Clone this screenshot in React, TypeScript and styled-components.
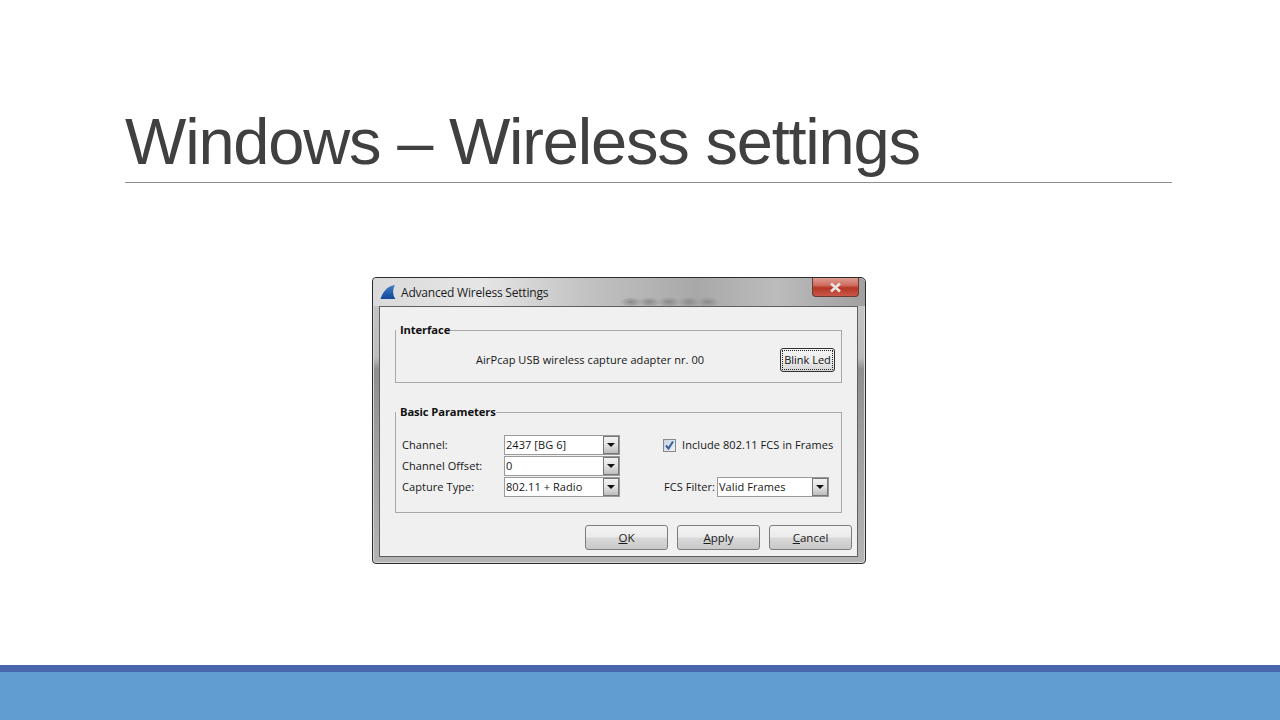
import * as React from 'react';
import styled, { createGlobalStyle } from 'styled-components';

const GlobalStyle = createGlobalStyle`
  html, body {
    margin: 0;
    padding: 0;
    background: #fff;
  }
`;

const Slide = styled.main`
  width: 1280px;
  height: 720px;
  display: flex;
  flex-direction: column;
  overflow: hidden;
  background: #fff;
`;

const Header = styled.header`
  height: 183px;
  margin: 0 108px 0 125px;
  box-sizing: border-box;
  border-bottom: 1px solid #8c8c8c;
  display: flex;
  align-items: flex-end;
`;

const Title = styled.h1`
  margin: 0;
  font: 400 65px/80px 'Liberation Sans', Arial, sans-serif;
  letter-spacing: -1.2px;
  color: #404040;
  white-space: nowrap;
`;

const Stage = styled.section`
  flex: 1;
  display: flex;
  align-items: flex-start;
  padding: 94px 0 0 372px;
`;

const Dialog = styled.div`
  width: 494px;
  height: 287px;
  box-sizing: border-box;
  border: 1px solid #2c2c2c;
  border-radius: 4px 5px 4px 4px;
  padding: 0 7px 6px 6px;
  display: flex;
  flex-direction: column;
  background:
    linear-gradient(180deg, #c8c8c8 0, #bdbdbd 28%, #8f8f8f 32%, #a0a0a0 60%, #b4b4b4 100%);
  box-shadow: inset 0 0 0 1px #d8d8d8;
`;

const TitleBar = styled.div`
  height: 28px;
  flex: none;
  margin: 0 -7px 0 -6px;
  padding: 0 6px 0 7px;
  display: flex;
  align-items: flex-start;
  gap: 5px;
  background:
    radial-gradient(ellipse 11px 5px at 258px 24px, #8a8a8a 0, transparent 100%),
    radial-gradient(ellipse 11px 5px at 276px 24px, #8a8a8a 0, transparent 100%),
    radial-gradient(ellipse 11px 5px at 296px 24px, #8a8a8a 0, transparent 100%),
    radial-gradient(ellipse 11px 5px at 316px 24px, #8a8a8a 0, transparent 100%),
    radial-gradient(ellipse 11px 5px at 335px 24px, #8a8a8a 0, transparent 100%),
    linear-gradient(90deg, #dadada 0, #e6e6e6 22%, #c4c4c4 42%, #a8a8a8 66%, #bcbcbc 82%, #a0a0a0 100%);
  border-radius: 4px 5px 0 0;
`;

const FinIcon = styled.svg`
  width: 16px;
  height: 16px;
  margin-top: 6px;
  flex: none;
`;

const WindowTitle = styled.span`
  font: 400 12px/29px 'Open Sans', 'Noto Sans', sans-serif;
  color: #1c1c1c;
  flex: 1;
  letter-spacing: -0.2px;
`;

const CloseButton = styled.div`
  width: 47px;
  height: 19px;
  box-sizing: border-box;
  border: 1px solid #6b3a34;
  border-top: none;
  border-radius: 0 0 4px 4px;
  background: linear-gradient(180deg, #dc9b90 0, #cf6d5f 40%, #b63524 55%, #c9584a 100%);
  display: flex;
  align-items: center;
  justify-content: center;
`;

const Client = styled.div`
  flex: 1;
  background: #f0f0f0;
  border: 1px solid #5f5f5f;
  padding: 14px 15px 6px 15px;
  display: flex;
  flex-direction: column;
`;

const Group = styled.fieldset<{ $height: number; $gap?: number }>`
  margin: ${(p) => p.$gap ?? 0}px 0 0;
  height: ${(p) => p.$height}px;
  box-sizing: border-box;
  padding: 0 6px;
  border: 1px solid #a8a8a8;
  min-width: 0;
`;

const Legend = styled.legend`
  padding: 0 0 2px 4px;
  margin-left: -6px;
  font: 700 11.2px/17px 'Open Sans', 'Noto Sans', sans-serif;
  color: #111;
  letter-spacing: -0.1px;
`;

const InterfaceRow = styled.div`
  display: flex;
  align-items: center;
  justify-content: space-between;
  height: 36px;
  margin-top: 2px;
  padding: 0 0 0 74px;
`;

const Text = styled.span`
  font: 400 11px/16px 'Open Sans', 'Noto Sans', sans-serif;
  color: #161616;
  white-space: nowrap;
  letter-spacing: 0.07px;
`;

const BlinkButton = styled.button`
  width: 55px;
  height: 24px;
  padding: 0;
  box-sizing: border-box;
  border: 1px solid #333;
  border-radius: 3px;
  outline: 1px dotted #222;
  outline-offset: -3px;
  background: linear-gradient(180deg, #f4f4f4 0, #ececec 50%, #d6d6d6 100%);
  font: 400 11px/16px 'Open Sans', 'Noto Sans', sans-serif;
  color: #111;
`;

const ParamGrid = styled.div`
  display: grid;
  grid-template-columns: 102px 116px 43px 1fr;
  grid-auto-rows: 20px;
  row-gap: 1px;
  align-items: center;
  margin-top: 13px;
`;

const Combo = styled.div<{ $width?: number }>`
  width: ${(p) => p.$width ?? 116}px;
  height: 20px;
  box-sizing: border-box;
  border: 1px solid #9a9a9a;
  background: #fff;
  display: flex;
  align-items: center;
  justify-content: space-between;
  padding-left: 1px;
`;

const ComboButton = styled.div`
  width: 16px;
  height: 18px;
  box-sizing: border-box;
  border: 1px solid #777;
  background: linear-gradient(180deg, #f2f2f2 0, #e2e2e2 50%, #bdbdbd 100%);
  display: flex;
  align-items: center;
  justify-content: center;

  &::after {
    content: '';
    border-left: 4px solid transparent;
    border-right: 4px solid transparent;
    border-top: 4px solid #111;
  }
`;

const CheckRow = styled.label`
  display: flex;
  align-items: center;
  gap: 6px;
`;

const CheckBox = styled.span`
  width: 13px;
  height: 13px;
  box-sizing: border-box;
  border: 1px solid #8a8a8a;
  background: linear-gradient(135deg, #c9d3e4 0, #eef1f6 100%);
  display: flex;
`;

const FilterRow = styled.div`
  display: flex;
  align-items: center;
  gap: 2px;
  margin-left: 1px;
`;

const ButtonBar = styled.div`
  display: flex;
  justify-content: flex-end;
  gap: 9px;
  margin: 12px -10px 0 0;
`;

const DialogButton = styled.button`
  width: 83px;
  height: 25px;
  padding: 0;
  box-sizing: border-box;
  border: 1px solid #7c7c7c;
  border-radius: 3px;
  background: linear-gradient(180deg, #f3f3f3 0, #ebebeb 48%, #d8d8d8 52%, #c9c9c9 100%);
  font: 400 11.5px/16px 'Open Sans', 'Noto Sans', sans-serif;
  color: #1a1a1a;

  u {
    text-underline-offset: 1px;
  }
`;

const FooterBand = styled.footer`
  height: 55px;
  flex: none;
  box-sizing: border-box;
  border-top: 7px solid #4a66ac;
  background: #629dd1;
`;

const Fin = () => (
  <FinIcon viewBox="0 0 16 16" aria-hidden>
    <defs>
      <linearGradient id="fin" x1="0" y1="0" x2="0" y2="1">
        <stop offset="0" stopColor="#3f7cc4" />
        <stop offset="1" stopColor="#12479b" />
      </linearGradient>
    </defs>
    <path d="M15 1 C9 1.5 3.5 6 0.5 15 L15.5 15 C12.5 11 12.5 5 15 1 Z" fill="url(#fin)" />
  </FinIcon>
);

const CloseGlyph = () => (
  <svg width="13" height="11" viewBox="0 0 13 11" aria-hidden>
    <path d="M2 1.5 L11 9.5 M11 1.5 L2 9.5" stroke="#e9e2e0" strokeWidth="2.8" />
  </svg>
);

const Tick = () => (
  <svg width="11" height="11" viewBox="0 0 11 11" aria-hidden>
    <path d="M2 5.5 L4.5 8.5 L9 1.5" stroke="#3a5f9e" strokeWidth="2" fill="none" />
  </svg>
);

const ComboBox = ({ value, width }: { value: string; width?: number }) => (
  <Combo $width={width}>
    <Text>{value}</Text>
    <ComboButton />
  </Combo>
);

export default function App(): JSX.Element {
  return (
    <Slide>
      <GlobalStyle />
      <Header>
        <Title>Windows – Wireless settings</Title>
      </Header>
      <Stage>
        <Dialog>
          <TitleBar>
            <Fin />
            <WindowTitle>Advanced Wireless Settings</WindowTitle>
            <CloseButton>
              <CloseGlyph />
            </CloseButton>
          </TitleBar>
          <Client>
            <Group $height={62}>
              <Legend>Interface</Legend>
              <InterfaceRow>
                <Text>AirPcap USB wireless capture adapter nr. 00</Text>
                <BlinkButton>Blink Led</BlinkButton>
              </InterfaceRow>
            </Group>
            <Group $height={110} $gap={20}>
              <Legend>Basic Parameters</Legend>
              <ParamGrid>
                <Text>Channel:</Text>
                <ComboBox value="2437 [BG 6]" />
                <span />
                <CheckRow>
                  <CheckBox>
                    <Tick />
                  </CheckBox>
                  <Text>Include 802.11 FCS in Frames</Text>
                </CheckRow>
                <Text>Channel Offset:</Text>
                <ComboBox value="0" />
                <span />
                <span />
                <Text>Capture Type:</Text>
                <ComboBox value="802.11 + Radio" />
                <span />
                <FilterRow>
                  <Text>FCS Filter:</Text>
                  <ComboBox value="Valid Frames" width={112} />
                </FilterRow>
              </ParamGrid>
            </Group>
            <ButtonBar>
              <DialogButton><u>O</u>K</DialogButton>
              <DialogButton><u>A</u>pply</DialogButton>
              <DialogButton><u>C</u>ancel</DialogButton>
            </ButtonBar>
          </Client>
        </Dialog>
      </Stage>
      <FooterBand />
    </Slide>
  );
}
